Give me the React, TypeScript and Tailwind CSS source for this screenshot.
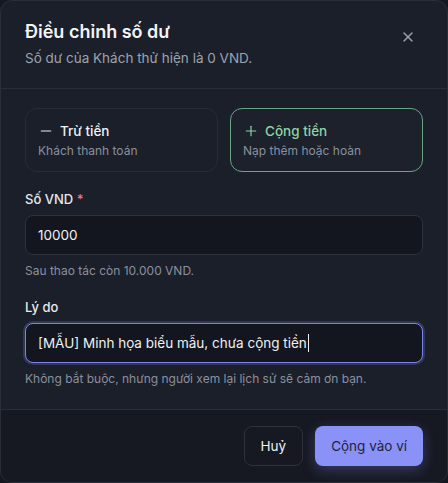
import { Minus, Plus, X } from 'lucide-react'

const App: React.FC = () => {
  return (
    <div className="h-[483px] w-[448px] bg-[#151821] font-['Inter','Noto_Sans',sans-serif]">
      <div className="flex h-full w-full flex-col overflow-hidden rounded-xl border border-[#2a2e39] bg-[#1b1f2a]">
        {/* header */}
        <div className="relative border-b border-[#2a2e39] px-6 pb-5 pt-[17px]">
          <p className="text-lg font-semibold leading-7 text-[#f3f4f6]">Điều chỉnh số dư</p>
          <p className="mt-0.5 text-[13.5px] leading-5 text-[#9ca3af]">Số dư của Khách thử hiện là 0 VND.</p>
          <button className="absolute right-[31px] top-[28px] text-[#9ca3af]">
            <X size={16} strokeWidth={2} />
          </button>
        </div>

        {/* body */}
        <div className="flex flex-1 flex-col px-6 pt-[19px]">
          <div className="grid grid-cols-2 gap-3">
            <div className="rounded-xl border border-[#282c37] bg-[#1b1f2a] p-3">
              <div className="flex items-center gap-1.5 text-[13.5px] font-medium leading-5 text-[#eef0f4]">
                <Minus size={16} strokeWidth={1.75} />
                <span>Trừ tiền</span>
              </div>
              <p className="mt-0.5 text-xs leading-4 text-[#8b909c]">Khách thanh toán</p>
            </div>
            <div className="rounded-xl border border-[#6aa583] bg-[#1c212b] p-3">
              <div className="flex items-center gap-1.5 text-[13.5px] font-medium leading-5 text-[#8fd3a5]">
                <Plus size={16} strokeWidth={1.75} />
                <span>Cộng tiền</span>
              </div>
              <p className="mt-0.5 text-xs leading-4 text-[#8b909c]">Nạp thêm hoặc hoàn</p>
            </div>
          </div>

          <label className="mt-[17px] text-[13px] font-medium leading-5 text-[#e5e7eb]">
            Số VND <span className="text-[#e0789b]">*</span>
          </label>
          <div className="mt-1.5 flex h-10 items-center rounded-lg border border-[#2c313c] bg-[#13161e] px-3 text-[13.5px] text-[#eef0f4]">
            10000
          </div>
          <p className="mt-2 text-xs leading-4 text-[#8b909c]">Sau thao tác còn 10.000 VND.</p>

          <label className="mt-[18px] text-[13px] font-medium leading-5 text-[#e5e7eb]">Lý do</label>
          <div className="mt-1.5 flex h-10 items-center rounded-lg border border-[#7b84e6] bg-[#13161e] px-3 text-[13.5px] text-[#eef0f4] shadow-[0_0_0_2px_rgba(129,140,248,0.22)]">
            <span>[MẪU] Minh họa biểu mẫu, chưa cộng tiền</span>
            <span className="ml-px h-[18px] w-px bg-[#eef0f4]" />
          </div>
          <p className="mt-2 text-xs leading-4 text-[#8b909c]">
            Không bắt buộc, nhưng người xem lại lịch sử sẽ cảm ơn bạn.
          </p>
        </div>

        {/* footer */}
        <div className="flex justify-end gap-3 border-t border-[#2a2e39] bg-[#161922] px-6 py-4">
          <button className="h-10 rounded-lg border border-[#2c313c] bg-[#161922] px-4 text-[13.5px] text-[#eef0f4]">
            Huỷ
          </button>
          <button className="h-10 rounded-lg bg-[#8a92f7] px-4 text-[13.5px] text-[#1e2240] shadow-[0_4px_14px_rgba(129,140,248,0.3)]">
            Cộng vào ví
          </button>
        </div>
      </div>
    </div>
  )
}

export default App
